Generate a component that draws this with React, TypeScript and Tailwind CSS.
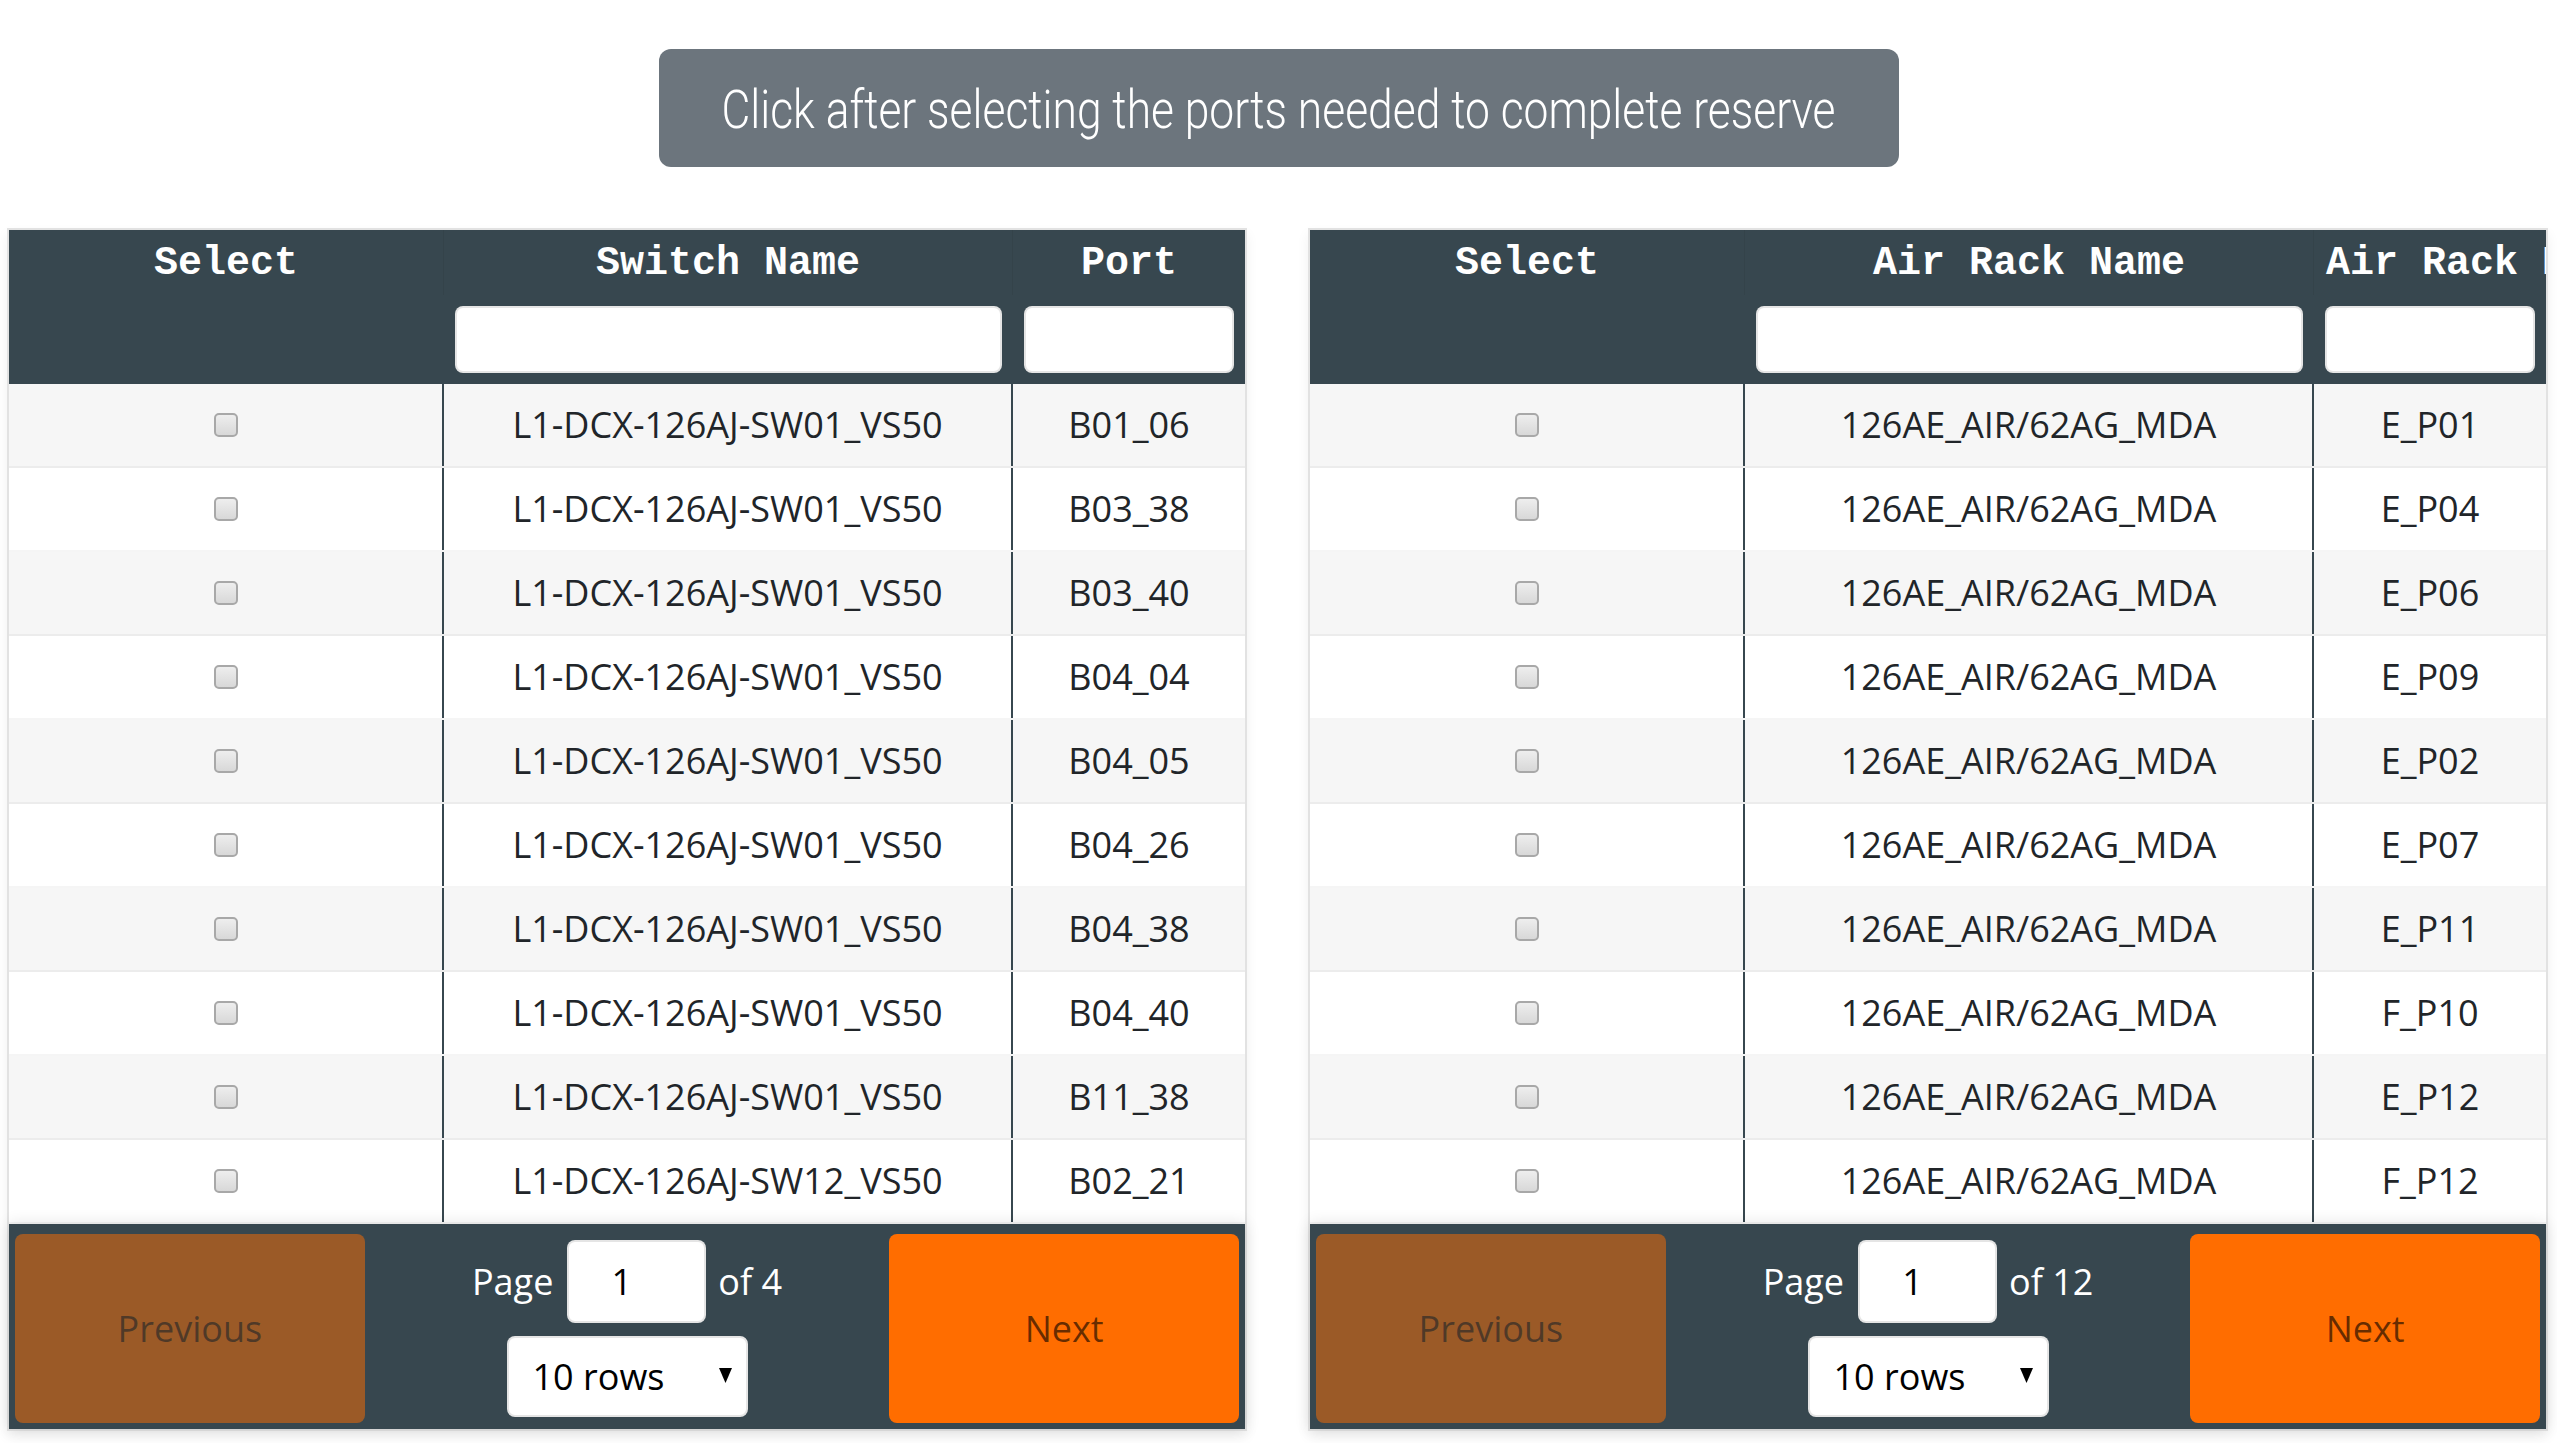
import React, { useLayoutEffect, useRef, useState } from 'react';

type Row = [string, string];

const leftRows: Row[] = [
  ['L1-DCX-126AJ-SW01_VS50', 'B01_06'],
  ['L1-DCX-126AJ-SW01_VS50', 'B03_38'],
  ['L1-DCX-126AJ-SW01_VS50', 'B03_40'],
  ['L1-DCX-126AJ-SW01_VS50', 'B04_04'],
  ['L1-DCX-126AJ-SW01_VS50', 'B04_05'],
  ['L1-DCX-126AJ-SW01_VS50', 'B04_26'],
  ['L1-DCX-126AJ-SW01_VS50', 'B04_38'],
  ['L1-DCX-126AJ-SW01_VS50', 'B04_40'],
  ['L1-DCX-126AJ-SW01_VS50', 'B11_38'],
  ['L1-DCX-126AJ-SW12_VS50', 'B02_21'],
];

const rightRows: Row[] = [
  ['126AE_AIR/62AG_MDA', 'E_P01'],
  ['126AE_AIR/62AG_MDA', 'E_P04'],
  ['126AE_AIR/62AG_MDA', 'E_P06'],
  ['126AE_AIR/62AG_MDA', 'E_P09'],
  ['126AE_AIR/62AG_MDA', 'E_P02'],
  ['126AE_AIR/62AG_MDA', 'E_P07'],
  ['126AE_AIR/62AG_MDA', 'E_P11'],
  ['126AE_AIR/62AG_MDA', 'F_P10'],
  ['126AE_AIR/62AG_MDA', 'E_P12'],
  ['126AE_AIR/62AG_MDA', 'F_P12'],
];

const colW = ['w-[435px]', 'w-[569px]', 'flex-1'];

const Checkbox = () => (
  <span className="block w-[24px] h-[24px] rounded-[5px] border-2 border-[#a8a8a8] bg-linear-to-b from-[#eeeeee] to-[#d8d8d8]" />
);

const FilterInput = () => (
  <div className="h-[67px] w-full bg-white rounded-[8px] border-2 border-black/10" />
);

// condensed look for the reserve button: squeeze the label to the width it has in the design
function CondensedLabel({ text, width }: { text: string; width: number }) {
  const ref = useRef<HTMLSpanElement>(null);
  const [sx, setSx] = useState(1);
  useLayoutEffect(() => {
    if (ref.current) setSx(width / ref.current.offsetWidth);
  }, [text, width]);
  return (
    <span ref={ref} className="inline-block whitespace-nowrap origin-center" style={{ transform: `scaleX(${sx})` }}>
      {text}
    </span>
  );
}

function DataTable({ heads, rows, pages }: { heads: string[]; rows: Row[]; pages: number }) {
  return (
    <div className="w-[1240px] border-2 border-[#e2e2e2] shadow-[0_6px_12px_rgba(0,0,0,0.06)] flex flex-col font-['Open_Sans','Noto_Sans',sans-serif]">
      <div className="bg-[#37474f] text-white">
        <div className="flex h-[65px] font-['Liberation_Mono','Courier_New',monospace] font-bold text-[40px]">
          {heads.map((h, i) => (
            <div
              key={h}
              className={`${colW[i]} px-[12px] pt-[3px] leading-[62px] text-center whitespace-nowrap overflow-hidden ${i < 2 ? 'border-r border-black/5' : ''}`}
            >
              {h}
            </div>
          ))}
        </div>
        <div className="flex h-[89px] items-center">
          <div className="w-[435px]" />
          <div className="w-[569px] px-[11px]">
            <FilterInput />
          </div>
          <div className="flex-1 px-[11px]">
            <FilterInput />
          </div>
        </div>
      </div>

      <div className="flex flex-col">
        {rows.map((r, i) => (
          <div
            key={i}
            className={`flex h-[84px] border-b-2 border-black/[0.04] text-[36px] text-[#212529] ${i % 2 === 0 ? 'bg-[#f6f6f6]' : 'bg-white'}`}
          >
            <div className="w-[435px] flex items-center justify-center border-r-2 border-[#37474f]">
              <Checkbox />
            </div>
            <div className="w-[569px] flex items-center justify-center border-r-2 border-[#37474f] whitespace-nowrap">
              {r[0]}
            </div>
            <div className="flex-1 flex items-center justify-center whitespace-nowrap">{r[1]}</div>
          </div>
        ))}
      </div>

      <div className="relative z-10 flex bg-[#37474f] pt-[10px] pb-[6px] px-[6px] text-[36px] shadow-[0_0_15px_0_rgba(0,0,0,0.12)]">
        <button className="flex-1 h-[189px] rounded-[8px] bg-[#ff6d00] text-black/60 opacity-50">Previous</button>
        <div className="flex-[1.5] flex flex-col items-center justify-center gap-[13px]">
          <div className="flex items-center text-white">
            <span>Page</span>
            <span className="ml-[14px] w-[139px] h-[83px] bg-white rounded-[8px] border-2 border-black/10 flex items-center justify-center pr-[30px] text-black">
              1
            </span>
            <span className="ml-[12px]">of {pages}</span>
          </div>
          <div className="w-[241px] h-[81px] bg-white rounded-[8px] border-2 border-black/10 flex items-center justify-between pl-[24px] pr-[14px] text-black">
            <span>10 rows</span>
            <svg width="13" height="15" viewBox="0 0 13 15" className="mb-[3px]">
              <polygon points="0,0 13,0 6.5,15" fill="#000" />
            </svg>
          </div>
        </div>
        <button className="flex-1 h-[189px] rounded-[8px] bg-[#ff6d00] text-black/60">Next</button>
      </div>
    </div>
  );
}

export default function App() {
  return (
    <div className="min-h-[1443px] bg-white">
      <div className="flex justify-center pt-[49px]">
        <button className="w-[1240px] h-[118px] rounded-[12px] bg-[#6c757d] text-white text-[53px] font-light pt-[6px] font-['Roboto','Open_Sans',sans-serif] flex items-center justify-center">
          <CondensedLabel text="Click after selecting the ports needed to complete reserve" width={1114} />
        </button>
      </div>
      <div className="mt-[61px] flex gap-[61px] pl-[7px]">
        <DataTable heads={['Select', 'Switch Name', 'Port']} rows={leftRows} pages={4} />
        <DataTable heads={['Select', 'Air Rack Name', 'Air Rack Port']} rows={rightRows} pages={12} />
      </div>
    </div>
  );
}
